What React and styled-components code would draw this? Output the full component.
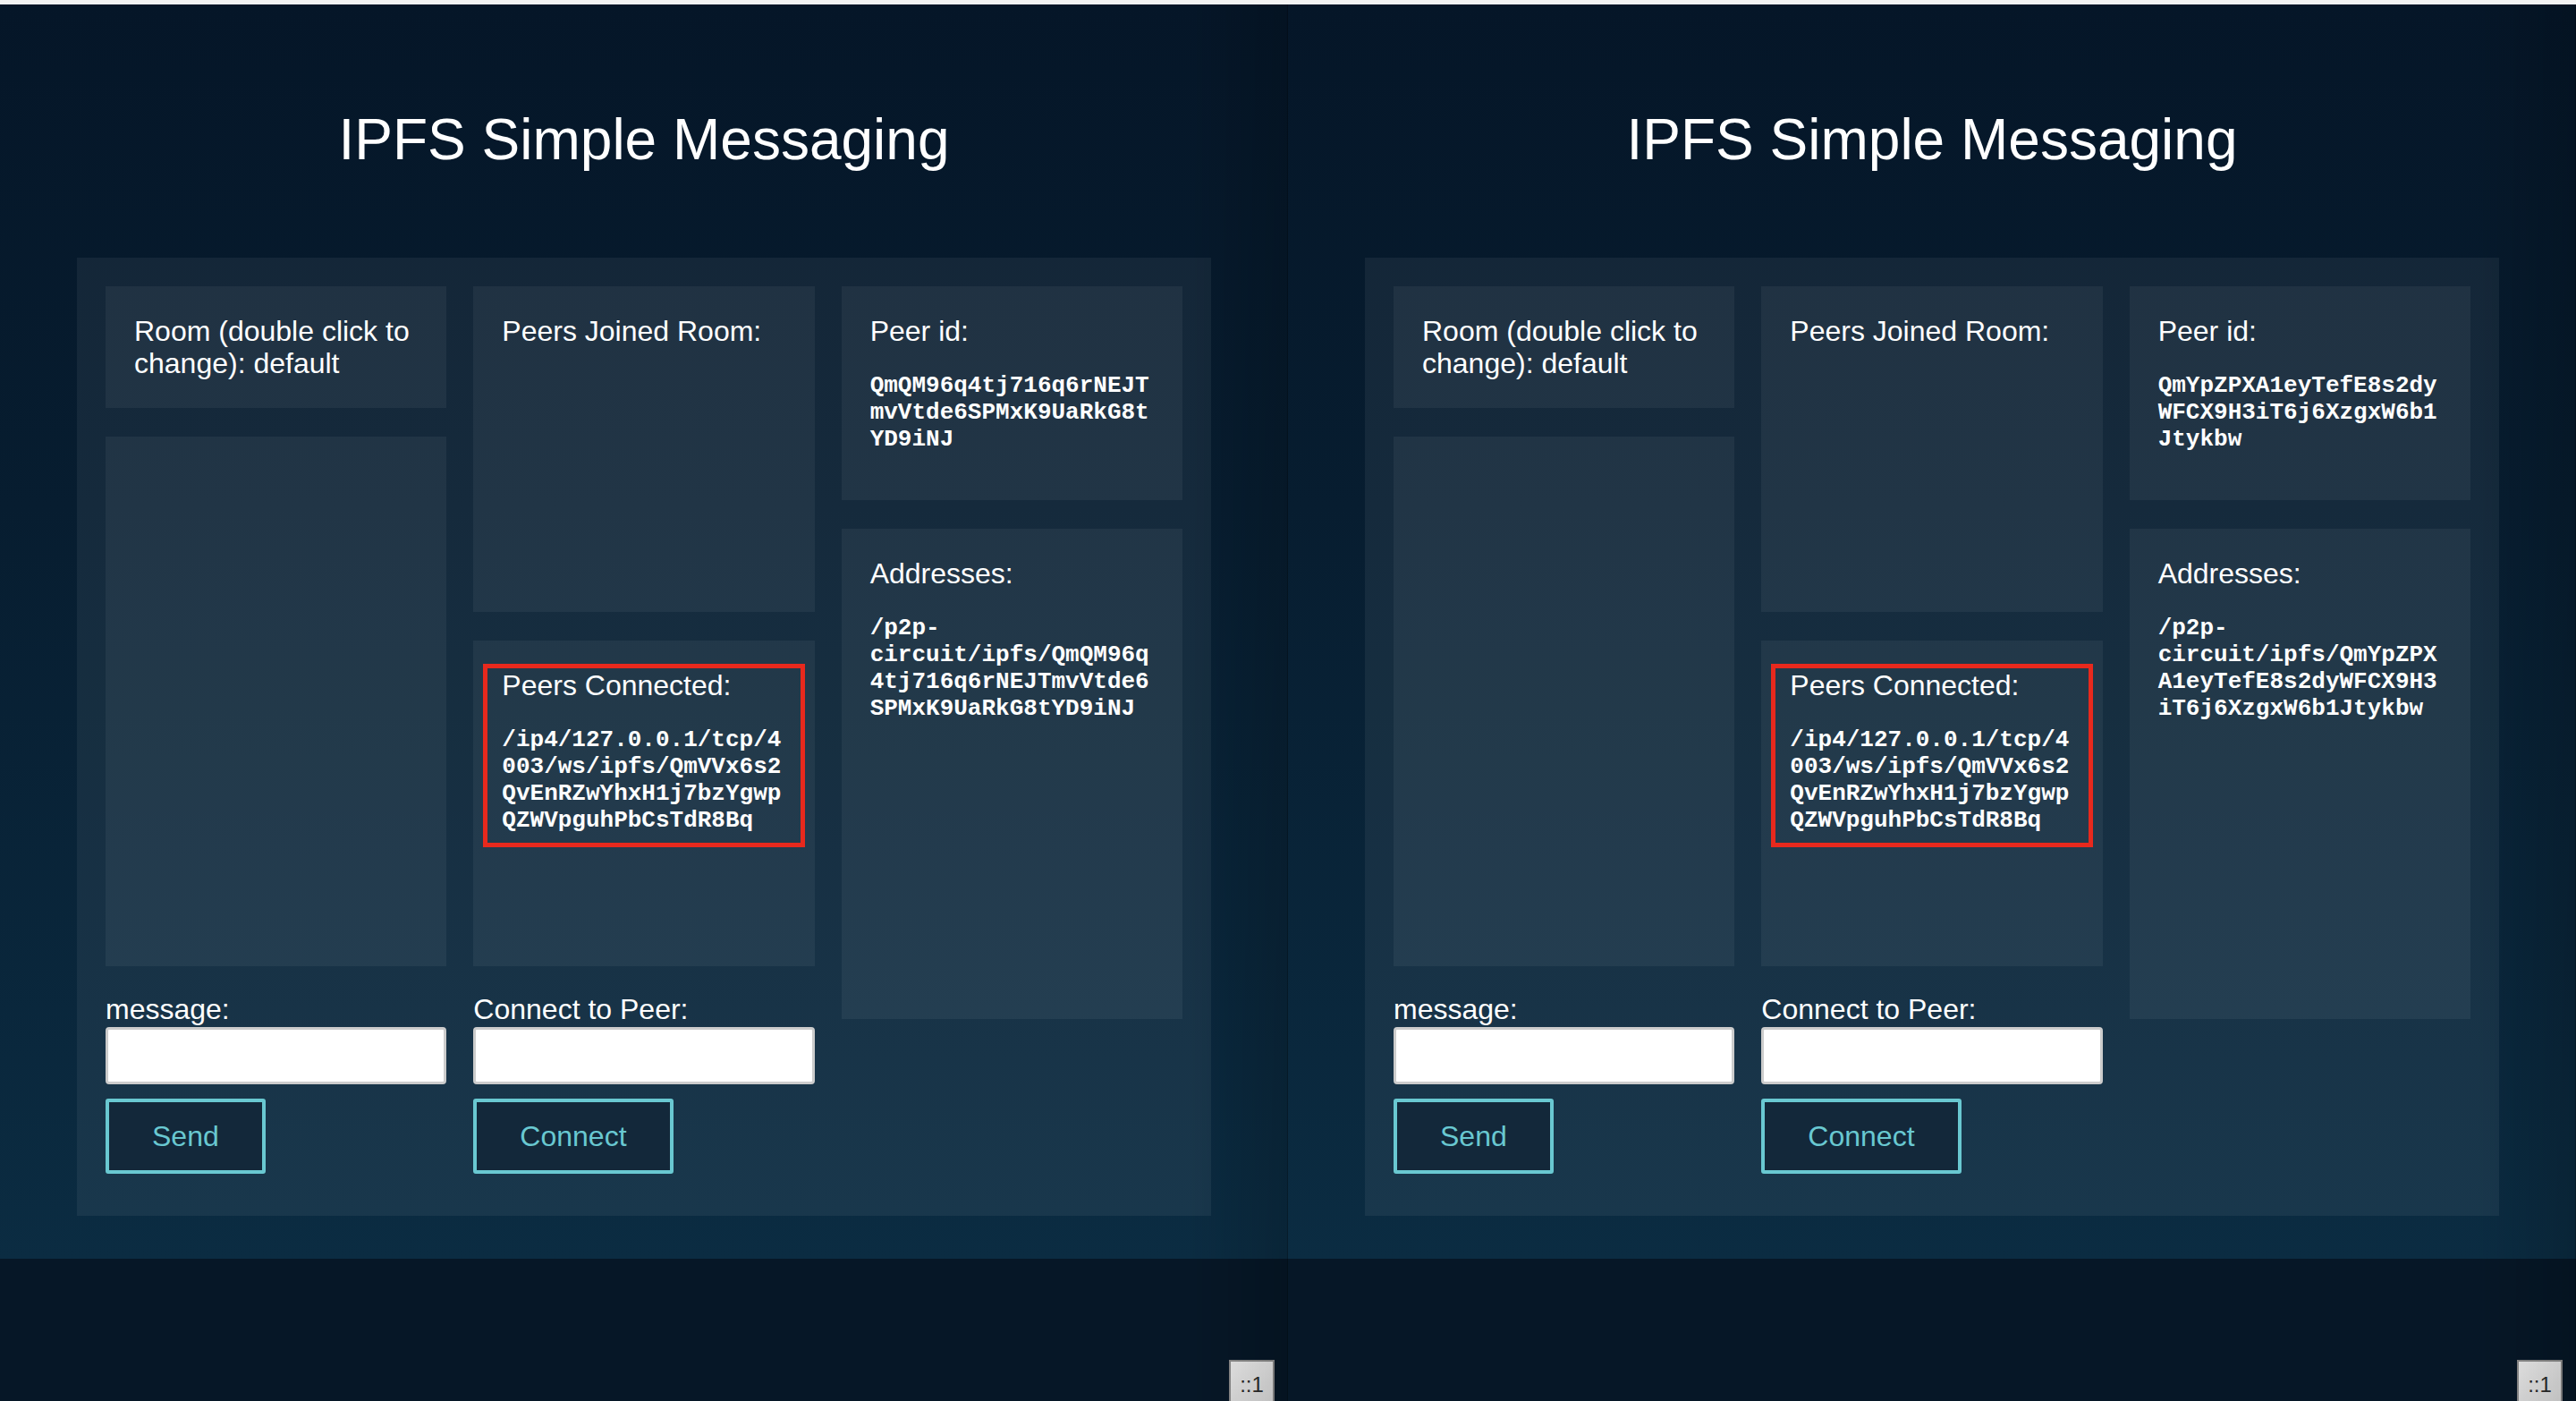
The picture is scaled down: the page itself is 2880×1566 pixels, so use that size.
import styled, { createGlobalStyle } from "styled-components";

const GlobalStyle = createGlobalStyle`
  html, body {
    margin: 0;
    padding: 0;
    background: #061828;
  }
  body {
    font-family: "Liberation Sans", Arial, sans-serif;
    color: #fff;
  }
  * {
    box-sizing: border-box;
  }
`;

const Screen = styled.div`
  display: flex;
  width: 2880px;
  height: 1566px;
  overflow: hidden;
`;

const Window = styled.div`
  position: relative;
  width: 1440px;
  height: 1566px;
  display: flex;
  flex-direction: column;
  background: #061727;

  &::after {
    content: "";
    position: absolute;
    top: 5px;
    right: 0;
    bottom: 0;
    width: 110px;
    background: linear-gradient(to right, rgba(0, 0, 0, 0), rgba(0, 0, 0, 0.16));
    border-right: 1px solid rgba(0, 0, 0, 0.35);
    pointer-events: none;
  }
`;

const ChromeStrip = styled.div`
  height: 5px;
  background: #f3f3f3;
  flex-shrink: 0;
`;

const AppArea = styled.div`
  padding: 115px 86px 48px;
  background: linear-gradient(to bottom, #051628 0%, #071d30 40%, #0b2c42 100%);
`;

const Title = styled.h1`
  margin: 0 0 96px;
  font-size: 64px;
  line-height: 72px;
  font-weight: 400;
  text-align: center;
  color: #fff;
`;

const Panel = styled.div`
  display: grid;
  grid-template-columns: repeat(3, 1fr);
  column-gap: 30px;
  align-items: start;
  padding: 32px 32px 47px;
  background: rgba(255, 255, 255, 0.06);
`;

const Column = styled.div`
  display: flex;
  flex-direction: column;
  min-width: 0;
`;

const Stack = styled.div`
  display: flex;
  flex-direction: column;
  gap: 32px;
  height: ${(p) => p.$height}px;
`;

const Box = styled.div`
  position: relative;
  flex: ${(p) => (p.$grow ? "1 1 0" : "0 0 auto")};
  padding: 32px;
  background: rgba(255, 255, 255, 0.055);
  min-width: 0;
`;

const BoxTitle = styled.div`
  font-size: 32px;
  line-height: 36px;
`;

const Mono = styled.p`
  margin: 28px 0 21px;
  font-family: "Liberation Mono", "Courier New", monospace;
  font-weight: 700;
  font-size: 26px;
  line-height: 30px;
  overflow-wrap: break-word;
`;

const Annotation = styled.div`
  position: absolute;
  top: 26px;
  left: 11px;
  right: 11px;
  height: 205px;
  border: 5px solid #e8291d;
  pointer-events: none;
`;

const Field = styled.div`
  display: flex;
  flex-direction: column;
  align-items: flex-start;
  margin-top: 30px;
`;

const Label = styled.label`
  font-size: 32px;
  line-height: 36px;
  margin-bottom: 2px;
`;

const Input = styled.input`
  width: 100%;
  height: 64px;
  border: 3px solid #cccccc;
  border-radius: 4px;
  background: #fff;
  font-size: 28px;
  padding: 0 10px;
  outline: none;
`;

const Button = styled.button`
  margin-top: 16px;
  padding: 20px 48px;
  border: 4px solid #69c8d1;
  border-radius: 3px;
  background: #13283a;
  color: #69c8d1;
  font-family: "Liberation Sans", Arial, sans-serif;
  font-size: 32px;
  line-height: 36px;
  cursor: pointer;
`;

const Badge = styled.div`
  position: absolute;
  right: 15px;
  bottom: -14px;
  width: 51px;
  height: 60px;
  padding-top: 12px;
  text-align: center;
  background: linear-gradient(to bottom, #ececec, #dcdcdc);
  border: 2px solid #8c8c8c;
  color: #2b2b2b;
  font-size: 24px;
  line-height: 28px;
`;

const CONNECTED =
  "/ip4/127.0.0.1/tcp/4003/ws/ipfs/QmVVx6s2QvEnRZwYhxH1j7bzYgwpQZWVpguhPbCsTdR8Bq";

const nodes = [
  { peerId: "QmQM96q4tj716q6rNEJTmvVtde6SPMxK9UaRkG8tYD9iNJ" },
  { peerId: "QmYpZPXA1eyTefE8s2dyWFCX9H3iT6j6XzgxW6b1Jtykbw" },
];

const Messenger = ({ peerId }) => (
  <Window>
    <ChromeStrip />
    <AppArea>
      <Title>IPFS Simple Messaging</Title>
      <Panel>
        <Column>
          <Stack $height={760}>
            <Box>
              <BoxTitle>Room (double click to change): default</BoxTitle>
            </Box>
            <Box $grow />
          </Stack>
          <Field>
            <Label>message:</Label>
            <Input type="text" />
            <Button>Send</Button>
          </Field>
        </Column>

        <Column>
          <Stack $height={760}>
            <Box $grow>
              <BoxTitle>Peers Joined Room:</BoxTitle>
            </Box>
            <Box $grow>
              <BoxTitle>Peers Connected:</BoxTitle>
              <Mono>{CONNECTED}</Mono>
              <Annotation />
            </Box>
          </Stack>
          <Field>
            <Label>Connect to Peer:</Label>
            <Input type="text" />
            <Button>Connect</Button>
          </Field>
        </Column>

        <Column>
          <Stack $height={819}>
            <Box>
              <BoxTitle>Peer id:</BoxTitle>
              <Mono>{peerId}</Mono>
            </Box>
            <Box $grow>
              <BoxTitle>Addresses:</BoxTitle>
              <Mono>{`/p2p-circuit/ipfs/${peerId}`}</Mono>
            </Box>
          </Stack>
        </Column>
      </Panel>
    </AppArea>
    <Badge>::1</Badge>
  </Window>
);

const App = () => (
  <>
    <GlobalStyle />
    <Screen>
      {nodes.map((n) => (
        <Messenger key={n.peerId} peerId={n.peerId} />
      ))}
    </Screen>
  </>
);

export default App;
